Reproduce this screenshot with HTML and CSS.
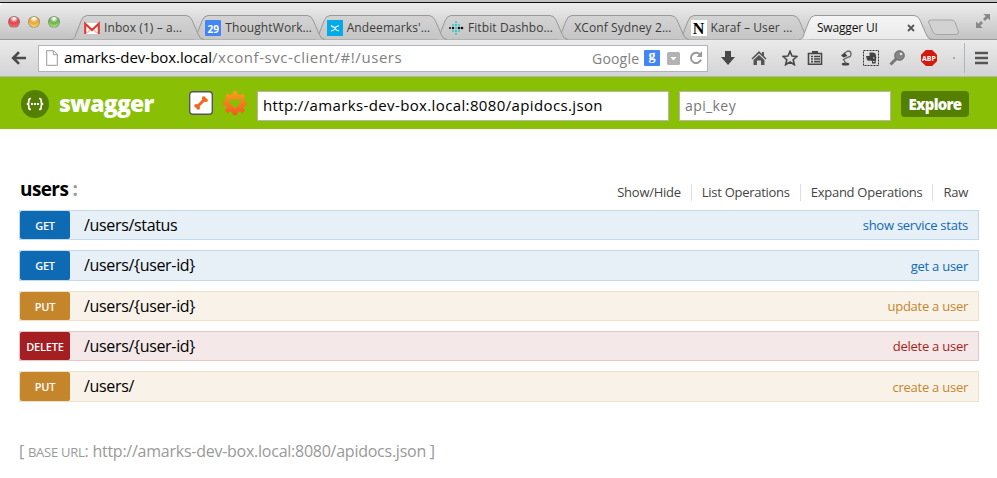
FILE: index.html
```html
<!DOCTYPE html>
<html lang="en">
<head>
<meta charset="utf-8">
<title>Swagger UI</title>
<link rel="stylesheet" href="styles.css">
</head>
<body>
<svg class="defs" width="0" height="0">
  <defs>
    <linearGradient id="tabfill" x1="0" y1="0" x2="0" y2="1"><stop offset="0" stop-color="#d3d3d3"/><stop offset="1" stop-color="#c6c6c6"/></linearGradient>
    <linearGradient id="activefill" x1="0" y1="0" x2="0" y2="1"><stop offset="0" stop-color="#f5f5f5"/><stop offset="1" stop-color="#eaeaea"/></linearGradient>
    <linearGradient id="orange" x1="0" y1="0" x2="0" y2="1"><stop offset="0" stop-color="#f7a11b"/><stop offset="1" stop-color="#f15a24"/></linearGradient>
    <symbol id="tab" viewBox="0 0 133 25"><path d="M0 24.5C4 24 4 22 5 19L10 6Q12 .5 16 .5H115Q119 .5 121 5L127 19Q129 24.5 133 24.5"/></symbol>
  </defs>
</svg>
<div class="desktop-edge"></div>
<header class="titlebar">
  <div class="lights"><i class="red"></i><i class="yellow"></i><i class="green"></i></div>
  <nav class="tabs">
    <div class="tab t1"><svg class="shape"><use href="#tab"/></svg>
      <svg class="fav" viewBox="0 0 16 16"><path fill="#fff" d="M0 3h16v11H0z"/><path fill="#e8b6b2" d="M2 13l5-5h2l5 5z"/><path fill="#fff" d="M3 14l5-5 5 5z"/><path fill="none" stroke="#dc3d35" stroke-width="2.2" d="M1.2 14V3.8L8 10l6.800-6.200V14"/></svg>
      <span>Inbox (1) – a…</span></div>
    <div class="tab t2"><svg class="shape"><use href="#tab"/></svg>
      <b class="fav calendar">29</b><span>ThoughtWork…</span></div>
    <div class="tab t3"><svg class="shape"><use href="#tab"/></svg>
      <svg class="fav" viewBox="0 0 16 16"><path fill="#05a9e8" d="M0 0h16v16H0z"/><path fill="none" stroke="#fff" stroke-width="1.100" d="M4 5.500q2.500 2.500 5 1.500l3-1.500M8.500 7q0 3-4.500 4M8 8.500q1.500 2 4 2.500"/></svg>
      <span>Andeemarks'…</span></div>
    <div class="tab t4"><svg class="shape"><use href="#tab"/></svg>
      <svg class="fav" viewBox="0 0 16 16"><g fill="#39c5c5"><circle cx="8" cy="2" r="1.100"/><circle cx="8" cy="5" r="1.200"/><circle cx="5" cy="5" r="1"/><circle cx="11" cy="5" r="1"/><circle cx="8" cy="11" r="1.200"/><circle cx="5" cy="11" r="1"/><circle cx="11" cy="11" r="1"/><circle cx="8" cy="14" r="1.100"/></g><g fill="#111"><circle cx="2" cy="8" r="1"/><circle cx="5" cy="8" r="1.200"/><circle cx="11" cy="8" r="1.300"/><circle cx="14" cy="8" r="1.300"/></g><circle cx="8" cy="8" r="1.200" fill="#39c5c5"/></svg>
      <span>Fitbit Dashbo…</span></div>
    <div class="tab t5"><svg class="shape"><use href="#tab"/></svg><span>XConf Sydney 2…</span></div>
    <div class="tab t6"><svg class="shape"><use href="#tab"/></svg>
      <b class="fav letter">N</b><span>Karaf – User …</span></div>
    <div class="tab active"><svg class="shape"><use href="#tab"/></svg><span>Swagger UI</span>
      <svg class="close" viewBox="0 0 8 8"><path d="M1 1l6 6M7 1L1 7"/></svg></div>
  </nav>
  <svg class="newtab" viewBox="0 0 33 17"><path d="M4.500 1H24Q27 1 28 3L31.500 13Q32 15.500 29 15.500H10Q7 15.500 6 13L1.500 3Q1 1 4.500 1Z"/></svg>
  <svg class="expand" viewBox="0 0 14 14"><path fill="#888" d="M7.500 0H14v6.500L11.800 4.300 9 7 7 5l2.700-2.800zM6.500 14H0V7.500l2.200 2.200L5 7l2 2-2.700 2.800z"/></svg>
</header>
<div class="toolbar">
  <svg class="back" viewBox="0 0 16 14"><path d="M15 7H2.500M8 1.200L2.200 7 8 12.800"/></svg>
  <div class="address">
    <svg class="page" viewBox="0 0 12 16"><path d="M.7.7h6.800l3.800 3.800v10.800H.7zM7.300.9v3.800h3.900"/></svg>
    <span class="url"><em>amarks-dev-box.local</em>/xconf-svc-client/#!/users</span>
    <span class="engine">Google</span>
    <b class="gicon">g</b>
    <svg class="drop" viewBox="0 0 13 13"><rect width="13" height="13" rx="1.500" fill="#b3b3b3"/><path fill="#fff" d="M3.500 5h6l-3 3.500z"/></svg>
    <svg class="reload" viewBox="0 0 14 14"><path fill="none" stroke="#999" stroke-width="2" d="M11 3.400A5.200 5.200 0 1 0 12 8.700"/><path fill="#999" d="M13 0v6H7.500z"/></svg>
  </div>
  <svg class="ico down" viewBox="0 0 16 16"><path fill="#484848" d="M5 1h6v6h4l-7 8-7-8h4z"/></svg>
  <svg class="ico home" viewBox="0 0 16 16"><path fill="#555" d="M8 1l3 3V2h2v4l2.500 2.500-1 1L8 3.500 1.500 9.500l-1-1zM8 5l5.500 5v5H10v-4.500H6V15H2.500v-5z"/></svg>
  <svg class="ico star" viewBox="0 0 16 16"><path fill="none" stroke="#484848" stroke-width="1.600" d="M8 1.300l2 4.700 5 .4-3.800 3.300 1.200 5L8 12l-4.400 2.700 1.200-5L1 6.400 6 6z"/></svg>
  <svg class="ico list" viewBox="0 0 16 16"><path fill="none" stroke="#484848" stroke-width="1.600" d="M1.500 3.500h13v10.700h-13zM4 6.500h2m1 0h6M4 9h2m1 0h6M4 11.600h2m1 0h6"/><path fill="#484848" d="M5 1h6v3H5z"/></svg>
  <svg class="ico lamp" viewBox="0 0 16 16"><ellipse cx="7.500" cy="14" rx="3.800" ry="1.600" fill="#444"/><path fill="#444" d="M3 5.500l3.500-3L9.500 6 5.500 7.500z"/><path fill="none" stroke="#666" stroke-width="1.300" d="M6.500 3L10 1q3 0 3 3t-2.500 3L5.500 9.500 8 13.500"/></svg>
  <svg class="ico ever" viewBox="0 0 16 16"><rect x=".5" y=".5" width="15" height="15" fill="none" stroke="#333" stroke-dasharray="2 1"/><path fill="#444" d="M6.500 2.500H10l2.500 1 .8 4-.8 6H9v-2.500l-2-.5-1 .5-2-1L3 6h3.500z"/><path fill="#ddd" d="M10 7.500h1.500v1H10zM10 11h1.500v1H10z"/></svg>
  <svg class="ico key" viewBox="0 0 16 16"><path stroke="#777" stroke-width="3" d="M8 8l-6.500 6.500"/><circle cx="10.500" cy="5.500" r="4.800" fill="#858585" stroke="#666"/><circle cx="12" cy="4" r="1.300" fill="#e5e5e5"/></svg>
  <span class="abp"><b>ABP</b></span>
  <i class="dot"></i>
  <i class="sep"></i>
  <svg class="menu" viewBox="0 0 13 14"><path stroke="#555" stroke-width="2.600" d="M0 2h13M0 7h13M0 12h13"/></svg>
</div>
<div class="swagger-bar">
  <svg class="logo" viewBox="0 0 28 28"><circle cx="14" cy="14" r="14" fill="#547f00"/><path fill="none" stroke="#fff" stroke-width="1.700" d="M10 8.500Q7.800 8.500 7.800 10.500V12Q7.800 14 5.700 14 7.800 14 7.800 16v1.500q0 2 2.200 2M18 8.500q2.200 0 2.200 2V12q0 2 2.100 2-2.100 0-2.100 2v1.500q0 2-2.200 2"/><path fill="#fff" d="M10 13h2v2h-2zM13 13h2v2h-2zM16 13h2v2h-2z"/></svg>
  <span class="brand">swagger</span>
  <svg class="bone" viewBox="0 0 24 24"><rect x=".7" y=".7" width="22.600" height="22.600" rx="3" fill="#fff" stroke="#555566" stroke-width="1.400"/><path stroke="#f26522" stroke-width="3" d="M8 16l8-8"/><g fill="#f26522"><circle cx="7.200" cy="14.800" r="1.900"/><circle cx="9.200" cy="16.800" r="1.900"/><circle cx="14.800" cy="7.200" r="1.900"/><circle cx="16.800" cy="9.200" r="1.900"/></g></svg>
  <svg class="gear" viewBox="0 0 24 24"><g fill="url(#orange)"><path d="M10 0h4l.8 3 2.400 1L20 2.500 22 5l-1.500 2.500 1 2.500 2.500.5v3.500l-2.500.7-1 2.500L22 19.500 19.500 22 17 20.500l-2.500 1L14 24h-4l-.7-2.500-2.300-1L4.500 22 2 19.500l1.500-2.800-1-2.300L0 14v-4l2.500-.5 1-2.500L2 5l2.500-2.500L7 4l2.300-1z"/></g><path fill="#89bf04" d="M12 17.500L7 12.500Q5.500 9 8.500 8q2.500-.3 3.500 2 1-2.300 3.500-2 3 1 1.500 4.500z"/></svg>
  <div class="field base"><span>http://amarks-dev-box.local:8080/apidocs.json</span></div>
  <div class="field keyfield"><span>api_key</span></div>
  <a class="explore"><span>Explore</span></a>
</div>
<main>
  <div class="heading">
    <h2><span>users</span> <i>:</i></h2>
    <ul><li>Show/Hide</li><li>List Operations</li><li>Expand Operations</li><li>Raw</li></ul>
  </div>
  <div class="op get"><b>GET</b><span class="path">/users/status</span><span class="desc">show service stats</span></div>
  <div class="op get tall"><b>GET</b><span class="path">/users/{user-id}</span><span class="desc">get a user</span></div>
  <div class="op put"><b>PUT</b><span class="path">/users/{user-id}</span><span class="desc">update a user</span></div>
  <div class="op delete"><b>DELETE</b><span class="path">/users/{user-id}</span><span class="desc">delete a user</span></div>
  <div class="op put tall"><b>PUT</b><span class="path">/users/</span><span class="desc">create a user</span></div>
  <footer>[ <small>BASE URL</small>: http://amarks-dev-box.local:8080/apidocs.json ]</footer>
</main>
</body>
</html>
```
FILE: styles.css
```css
* { box-sizing: border-box; }
body { margin: 0; width: 997px; height: 478px; overflow: hidden; background: #fff; font-family: "Open Sans", sans-serif; color: #000; }
svg { display: block; flex: none; }
.defs { position: absolute; }
span, b { white-space: nowrap; }

.desktop-edge { height: 3px; background: #c4c4c4; border-bottom: 1px solid #111; }
.titlebar { height: 37px; display: flex; align-items: flex-end; background: linear-gradient(#ededed, #c3c3c3); border-bottom: 1px solid #999; border-radius: 4px 0 0; }
.lights { display: flex; gap: 8px; width: 71px; padding-left: 8px; align-self: flex-start; margin-top: 13px; }
.lights i { width: 12px; height: 12px; border-radius: 50%; border: 1px solid #7779; }
.red { background: radial-gradient(circle at 50% 15%, #fff 5%, #e2434a 45%, #f77 100%); }
.yellow { background: radial-gradient(circle at 50% 15%, #fff 5%, #e9a42f 45%, #fe7 100%); }
.green { background: radial-gradient(circle at 50% 15%, #fff 5%, #66ae49 45%, #bf8 100%); }
.tabs { display: flex; height: 25px; margin-bottom: -1px; }
.tab { position: relative; flex: none; width: 133px; margin-right: -11.7px; height: 25px; display: flex; align-items: center; padding-left: 13px; font-size: 12px; letter-spacing: .1px; color: #3c3c3c; }
.shape { position: absolute; left: 0; top: 0; width: 133px; height: 25px; fill: url(#tabfill); stroke: #999; z-index: -1; }
.t1 { z-index: 7; } .t2 { z-index: 6; } .t3 { z-index: 5; } .t4 { z-index: 4; } .t5 { z-index: 3; } .t6 { z-index: 2; }
.active { z-index: 8; color: #111; padding-left: 18px; margin-right: 0; letter-spacing: -.15px; }
.active .shape { fill: url(#activefill); }
.t5 { padding-left: 18px; }
.fav { width: 16px; height: 16px; margin-right: 4px; flex: none; letter-spacing: 0; }
.calendar { background: #4285f4; border-radius: 1px; color: #fff; font-size: 10px; line-height: 18px; text-align: center; }
.letter { background: #fff; font: bold 16px/17px "Liberation Serif", serif; color: #000; text-align: center; }
.close { position: absolute; left: 108px; top: 9px; width: 8px; height: 8px; stroke: #555; stroke-width: 1.8; }
.newtab { width: 33px; height: 17px; margin: 0 0 3px -5px; fill: #d2d2d2; stroke: #a5a5a5; }
.expand { width: 14px; height: 14px; margin: 0 0 11px 16px; }

.toolbar { height: 37px; display: flex; align-items: center; background: linear-gradient(#eaeaea, #d4d4d6); border-bottom: 1px solid #b5b5b5; }
.back { width: 16px; height: 14px; margin: 0 11px; fill: none; stroke: #4a4a4a; stroke-width: 2.6; }
.address { width: 670px; height: 27px; display: flex; align-items: center; background: #fff; border: 1px solid #b0b3ba; padding-left: 7px; font-size: 14px; color: #808080; }
.page { width: 12px; height: 16px; fill: #fff; stroke: #999; }
.url { margin-left: 6px; width: 528px; font-size: 15px; letter-spacing: .56px; line-height: 20px; margin-top: -2px; }
.url em { font-style: normal; color: #000; letter-spacing: -.03px; }
.gicon { width: 16px; height: 16px; margin-left: 4px; border-radius: 1px; background: #4285f4; color: #fff; font: bold 14px/12px "Liberation Serif", serif; text-align: center; }
.engine { width: 48px; letter-spacing: .2px; }
.drop { width: 13px; height: 13px; margin-left: 7px; }
.reload { width: 14px; height: 14px; margin-left: 9px; }
.ico { width: 16px; height: 16px; }
.down { margin-left: 12px; } .home { margin-left: 15px; } .star { margin-left: 15px; }
.list { margin-left: 9px; } .lamp { margin-left: 15px; } .ever { margin-left: 9px; } .key { margin-left: 10px; }
.abp { display: flex; align-items: center; justify-content: center; width: 16px; height: 16px; margin-left: 16px; flex: none; background: #d21b0e; clip-path: polygon(30% 0, 70% 0, 100% 30%, 100% 70%, 70% 100%, 30% 100%, 0 70%, 0 30%); color: #fff; font-size: 7px; }
.dot { width: 2px; height: 2px; margin-left: 16px; background: #aaa; }
.sep { width: 1px; height: 30px; margin-left: 9px; background: #b0b5bb; }
.menu { width: 13px; height: 14px; margin-left: 10px; }

.swagger-bar { height: 52px; display: flex; align-items: center; background: #89bf04; padding-left: 21px; }
.logo { width: 28px; height: 28px; margin-top: 2px; }
.brand { color: #fff; font-weight: 800; font-size: 23px; width: 130px; padding-left: 10px; line-height: 30px; letter-spacing: -.8px; }
.bone { width: 24px; height: 24px; margin-left: 10px; }
.gear { width: 24px; height: 24px; margin-left: 10px; }
.field { height: 30px; display: flex; align-items: center; border: 1px solid #b5b5a8; background: #fff; font-size: 15px; padding: 0 0 2px 5px; margin-top: 6px; }
.base { width: 412px; margin-left: 10px; letter-spacing: .37px; }
.keyfield { width: 212px; margin-left: 10px; color: #777; font-size: 14px; letter-spacing: .4px; }
.explore { width: 68px; height: 26px; margin: 2px 0 0 10px; padding-bottom: 1px; border-radius: 4px; background: #547f00; color: #fff; font-size: 15px; font-weight: 800; letter-spacing: -.75px; display: flex; align-items: center; justify-content: center; }

main { width: 960px; margin-left: 19px; padding-top: 46px; }
.heading { height: 35px; display: flex; justify-content: space-between; }
h2 { margin: 0 0 0 1px; font-size: 19px; line-height: 28px; letter-spacing: -.6px; }
h2 i { font-style: normal; color: #999; }
.heading ul { display: flex; list-style: none; margin: 9px 11px 0 0; padding: 0; font-size: 13px; letter-spacing: -.27px; color: #444; height: 17px; line-height: 16px; }
.heading li + li { margin-left: 10px; padding-left: 10px; border-left: 1px solid #ddd; }
.op { height: 30px; margin-bottom: 10px; display: flex; align-items: center; border: 1px solid; }
.tall { height: 31px; }
.op b { width: 50px; height: 28px; border-radius: 2px; text-align: center; color: #fff; font-size: 11px; line-height: 29px; font-weight: 600; letter-spacing: -.2px; }
.tall b { height: 29px; }
.path { margin-left: 14px; flex: 1; font-size: 16px; line-height: 22px; letter-spacing: -.33px; color: #000; padding-bottom: 1px; }
.desc { margin-right: 10px; font-size: 13px; letter-spacing: -.25px; }
.get { background: #e7eff7; border-color: #c3d9ec; color: #0f6ab4; } .get b { background: #0f6ab4; }
.put { background: #f9f2e9; border-color: #f0e0ca; color: #c5862b; } .put b { background: #c5862b; }
.delete { background: #f5e8e8; border-color: #e8c6c7; color: #a41e22; } .delete b { background: #a41e22; }
footer { margin-top: 37px; color: #999; font-size: 16px; line-height: 24px; letter-spacing: -.25px; }
footer small { font-size: 13px; }
```
